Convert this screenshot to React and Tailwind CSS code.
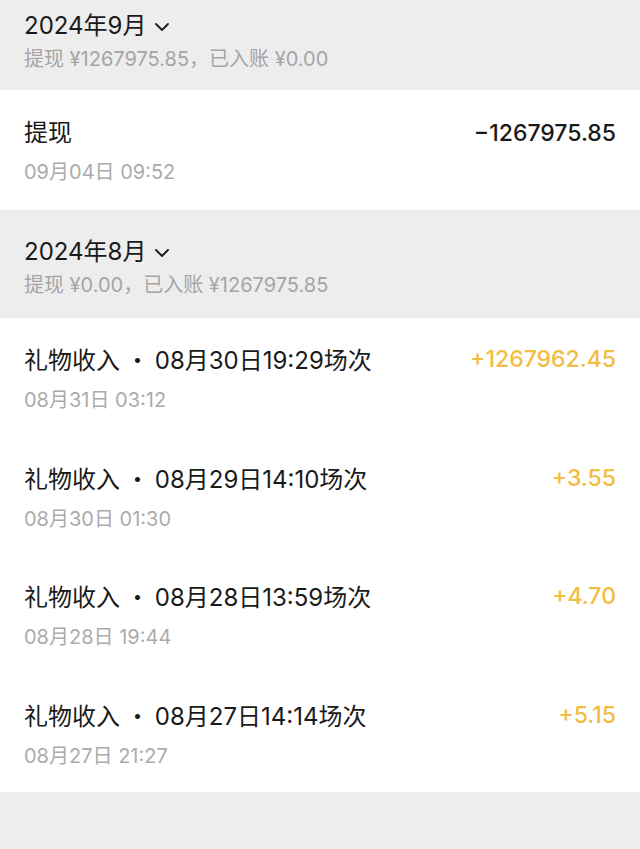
const sections = [
  {
    month: '2024年9月',
    summary: '提现 ¥1267975.85，已入账 ¥0.00',
    first: true,
    rows: [{ title: '提现', time: '09月04日 09:52', amount: '−1267975.85', income: false }],
  },
  {
    month: '2024年8月',
    summary: '提现 ¥0.00，已入账 ¥1267975.85',
    rows: [
      { title: '礼物收入', session: '08月30日19:29场次', time: '08月31日 03:12', amount: '+1267962.45', income: true },
      { title: '礼物收入', session: '08月29日14:10场次', time: '08月30日 01:30', amount: '+3.55', income: true },
      { title: '礼物收入', session: '08月28日13:59场次', time: '08月28日 19:44', amount: '+4.70', income: true },
      { title: '礼物收入', session: '08月27日14:14场次', time: '08月27日 21:27', amount: '+5.15', income: true },
    ],
  },
]

function Chevron() {
  return (
    <svg width="16" height="10" viewBox="0 0 16 10" className="ml-[8px] mt-[2px]">
      <path d="M2 2l6 6 6-6" fill="none" stroke="#1a1a1a" strokeWidth="1.8" strokeLinecap="round" strokeLinejoin="round" />
    </svg>
  )
}

export default function App() {
  return (
    <div
      className="min-h-[849px] bg-[#ededed]"
      style={{ fontFamily: 'Inter, "Noto Sans CJK SC", sans-serif' }}
    >
      {sections.map((section) => (
        <div key={section.month}>
          <div className={`px-[24px] ${section.first ? 'pt-[10px] pb-[18px]' : 'pt-[26px] pb-[20px]'}`}>
            <div className="flex items-center text-[24px] leading-[32px] text-[#1a1a1a]">
              {section.month}
              <Chevron />
            </div>
            <div className="mt-[4px] text-[20px] leading-[26px] text-[#a5a5a5]">{section.summary}</div>
          </div>
          <div className="bg-white">
            {section.rows.map((row) => (
              <div
                key={row.time}
                className={`flex items-start justify-between px-[24px] ${section.first ? 'h-[120px] pt-[27px]' : 'h-[118.5px] pt-[25px]'}`}
              >
                <div>
                  <div className="text-[24px] leading-[32px] text-[#1a1a1a]">
                    {row.title}
                    {row.session && (
                      <>
                        <span style={{ fontFamily: '"Noto Sans CJK SC", sans-serif' }}> · </span>
                        {row.session}
                      </>
                    )}
                  </div>
                  <div className="mt-[10px] text-[20px] leading-[26px] text-[#ababab]">{row.time}</div>
                </div>
                <div
                  className={`text-[23px] font-medium leading-[32px] ${row.income ? 'text-[#f2bd42]' : 'text-[#1a1a1a]'}`}
                >
                  {row.amount}
                </div>
              </div>
            ))}
          </div>
        </div>
      ))}
    </div>
  )
}
